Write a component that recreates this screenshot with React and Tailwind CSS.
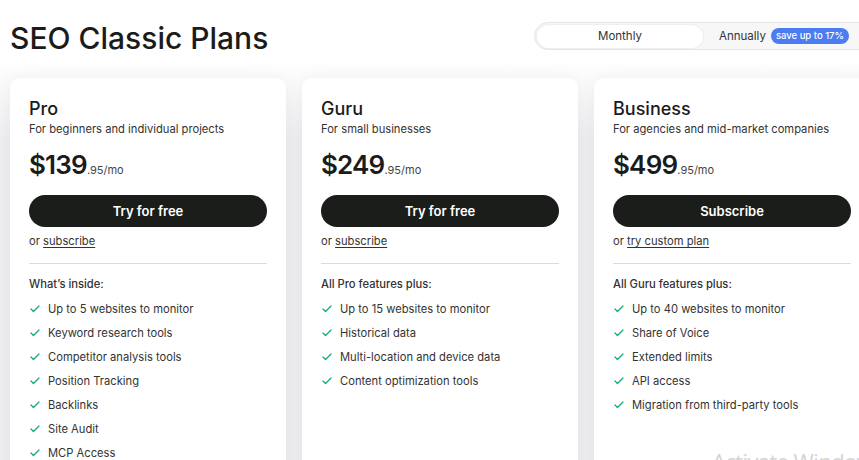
import React from "react";
import { Check } from "lucide-react";

const plans = [
  {
    name: "Pro",
    tagline: "For beginners and individual projects",
    price: "$139",
    cents: ".95/mo",
    cta: "Try for free",
    alt: "subscribe",
    heading: "What’s inside:",
    features: [
      "Up to 5 websites to monitor",
      "Keyword research tools",
      "Competitor analysis tools",
      "Position Tracking",
      "Backlinks",
      "Site Audit",
      "MCP Access",
    ],
  },
  {
    name: "Guru",
    tagline: "For small businesses",
    price: "$249",
    cents: ".95/mo",
    cta: "Try for free",
    alt: "subscribe",
    heading: "All Pro features plus:",
    features: [
      "Up to 15 websites to monitor",
      "Historical data",
      "Multi-location and device data",
      "Content optimization tools",
    ],
  },
  {
    name: "Business",
    tagline: "For agencies and mid-market companies",
    price: "$499",
    cents: ".95/mo",
    cta: "Subscribe",
    alt: "try custom plan",
    heading: "All Guru features plus:",
    features: [
      "Up to 40 websites to monitor",
      "Share of Voice",
      "Extended limits",
      "API access",
      "Migration from third-party tools",
    ],
  },
];

const PlanCard = ({ plan }) => (
  <div className="w-[276px] h-[420px] shrink-0 bg-white rounded-[10px] px-[19px] pt-[19px] shadow-[0_0_18px_rgba(0,0,0,0.05)]">
    <h2 className="text-[18px] leading-6 font-medium text-[#1b1b1b]">{plan.name}</h2>
    <p className="text-[11.2px] leading-4 text-[#333]">{plan.tagline}</p>

    <div className="mt-3 flex items-baseline">
      <span className="text-[26px] leading-8 font-semibold tracking-[-0.8px] text-[#1b1b1b]">{plan.price}</span>
      <span className="text-[11px] text-[#444]">{plan.cents}</span>
    </div>

    <button className="mt-[14px] w-full h-8 pt-px rounded-full bg-[#1b1d1b] text-white text-[13px] font-semibold">
      {plan.cta}
    </button>

    <p className="mt-[6px] text-[11.2px] leading-4 text-[#333]">
      or <span className="underline underline-offset-2">{plan.alt}</span>
    </p>

    <div className="mt-[14px] h-px bg-[#dcdcdc]" />

    <p className="mt-3 text-[11.2px] leading-4 font-medium text-[#333]">{plan.heading}</p>

    <ul className="mt-[5px]">
      {plan.features.map((f) => (
        <li key={f} className="h-6 flex items-center gap-[7px] text-[11.2px] text-[#333]">
          <Check className="w-3 h-3 text-[#16a87a]" strokeWidth={2.5} />
          {f}
        </li>
      ))}
    </ul>
  </div>
);

export default function App() {
  return (
    <div
      className="relative w-[859px] h-[460px] overflow-hidden bg-white"
      style={{ fontFamily: "Inter, 'Liberation Sans', sans-serif" }}
    >
      <div className="flex justify-between pl-[10px] pt-[21px] h-[60px] items-start">
        <h1 className="text-[30px] leading-[28px] pt-[3px] font-medium text-[#1b1b1b]">
          SEO Classic Plans
        </h1>
        <div className="w-[340px] h-[28px] mt-px -mr-[15px] shrink-0 flex items-center rounded-full border border-[#e6e6e6] bg-[#f7f7f7] pl-[2px]">
          <div className="w-[166px] h-[23px] pt-px rounded-full bg-white shadow-[0_0_2px_rgba(0,0,0,0.12)] flex items-center justify-center text-[11.5px] text-[#333]">
            Monthly
          </div>
          <span className="ml-4 pt-px text-[11.5px] text-[#333]">Annually</span>
          <span className="ml-[5px] h-4 px-[5px] rounded-full bg-[#4b7cf2] text-white text-[9.5px] font-medium flex items-center">
            save up to 17%
          </span>
        </div>
      </div>

      <div className="flex gap-4 pl-[10px] pt-[18px] h-[400px] bg-[linear-gradient(to_bottom,#ffffff_0px,#eeeef1_80px)]">
        {plans.map((p) => (
          <PlanCard key={p.name} plan={p} />
        ))}
      </div>

      <span
        className="absolute left-[712px] top-[445px] text-[22px] tracking-[-0.6px] text-[#d4d4d4] whitespace-nowrap"
        style={{ fontFamily: "'Open Sans', sans-serif" }}
      >
        Activate Windows
      </span>
    </div>
  );
}
